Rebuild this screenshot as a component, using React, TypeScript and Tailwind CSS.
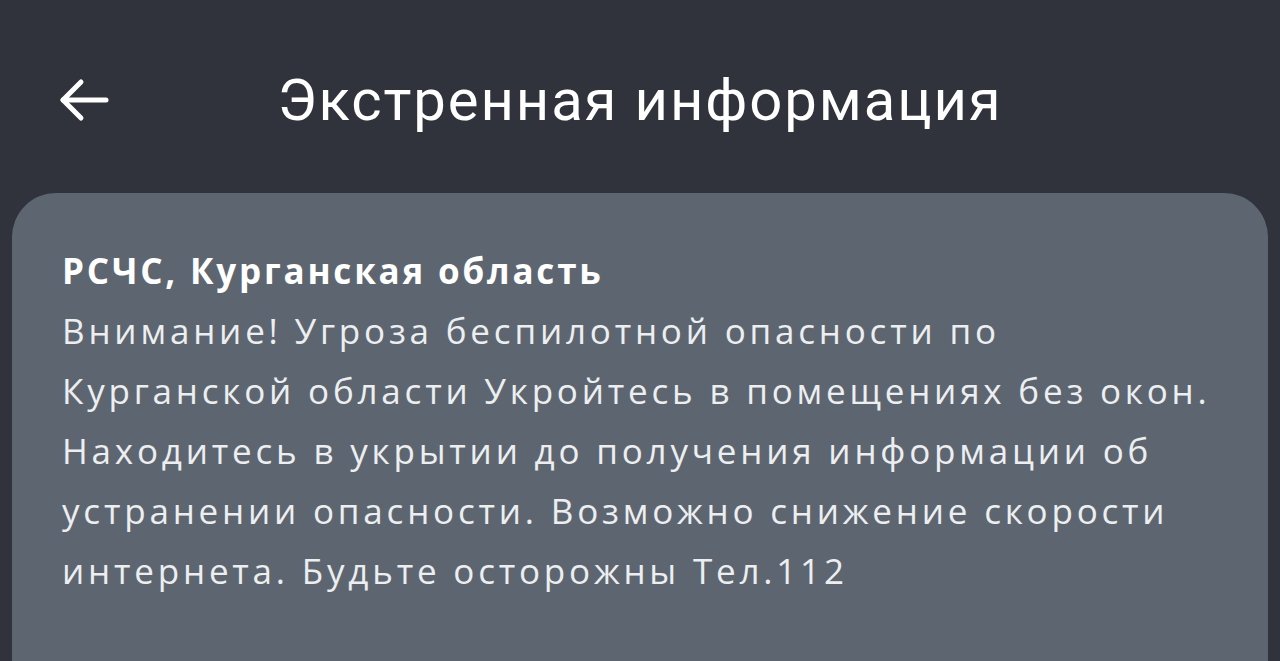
export default function App() {
  return (
    <div className="w-[1280px] h-[661px] overflow-hidden bg-[#30333b] flex flex-col">
      <header className="relative h-[193px] flex items-start justify-center pt-[66px]">
        <button className="absolute left-[58px] top-[78px] w-[52px] h-[44px] flex items-center justify-center">
          <svg width="52" height="44" viewBox="0 0 52 44" fill="none" stroke="#ffffff" strokeWidth="5" strokeLinecap="round" strokeLinejoin="round">
            <path d="M48 22H5" />
            <path d="M23 4L5 22L23 40" />
          </svg>
        </button>
        <h1 className="text-white text-[58px] leading-[68px] tracking-[1.9px] font-normal [font-family:Roboto,'Noto_Sans',sans-serif]">
          Экстренная информация
        </h1>
      </header>
      <main className="mx-[12px] flex-1 rounded-t-[44px] bg-[#5d6670] px-[50px] pt-[48px]">
        <h2 className="text-white text-[35px] leading-[60px] font-bold tracking-[2.8px] [font-family:'Open_Sans','Noto_Sans',sans-serif]">
          РСЧС, Курганская область
        </h2>
        <p className="text-[#eceef0] text-[35px] leading-[60px] tracking-[3.8px] whitespace-nowrap [font-family:'Open_Sans','Noto_Sans',sans-serif]">
          Внимание! Угроза беспилотной опасности по
          <br />
          Курганской области Укройтесь в помещениях без окон.
          <br />
          Находитесь в укрытии до получения информации об
          <br />
          устранении опасности. Возможно снижение скорости
          <br />
          интернета. Будьте осторожны Тел.112
        </p>
      </main>
    </div>
  );
}
